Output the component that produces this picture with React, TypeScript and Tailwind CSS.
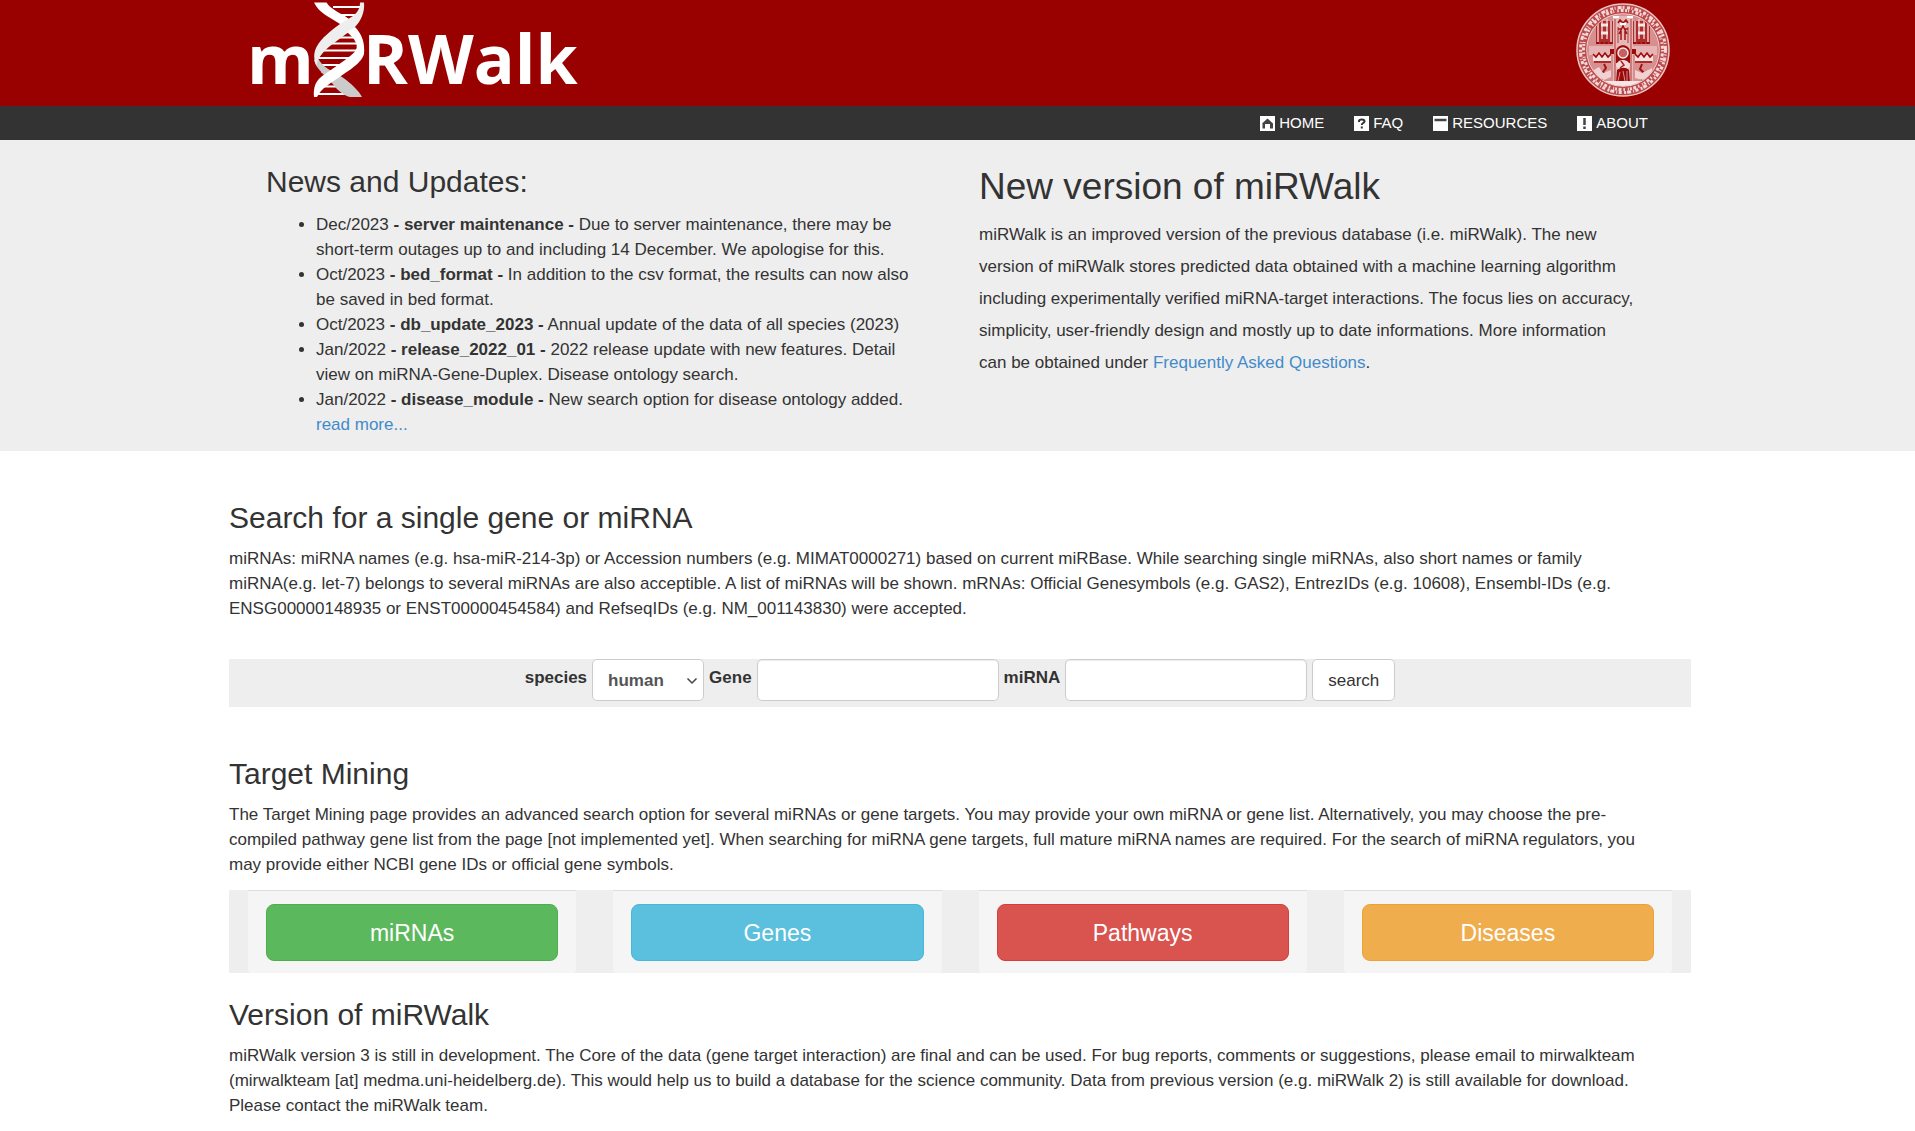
import type { ReactNode } from "react";

function Logo() {
  return (
    <svg className="block h-[106px] w-[340px]" viewBox="0 0 340 106" role="img" aria-label="miRWalk">
      <g fill="#fff" fontFamily="'Open Sans', 'Noto Sans', sans-serif" fontWeight="700" fontSize="68">
        <text x="1" y="84">m</text>
        <text x="117" y="84">RWalk</text>
      </g>
      {/* rungs */}
      <path
        d="M87 7H116M93 15H112M98 32H106M92 37.500H111M85 43.500H113M78 50.500H111M73 58H103M71 65H93M75 71.500H88M76 86.500H98M71 94H110"
        stroke="#fff"
        strokeWidth="2"
      />
      {/* strands */}
      <path d="M68 60C70 70 82 77 90 88C94 92 99 96 104 97H116C113 91 106 84 96 77C86 71 76 67 72 58Z" fill="#cbcbcb" />
      <path d="M68 2.500H80.500C86 11 96 13 103 19L109 27L101 32L94 24C82 16 73 13 68 2.500Z" fill="#fff" />
      <path d="M118 2.500H114C114 8 112 12 107 16L94 24C86 30 75 38 70.500 47C67 54 68 60 70.500 66C71 58 78 51 84 46L96 37C101 33 106 30 109 27C115 21 119 12 118 2.500Z" fill="#eee" />
      <path d="M109 27C116 34 119 43 118 54C115 65 98 73 82 85C76 89 73 93 71 97H68C67 82 73 78 82 72L99 60C107 54 113 50 110 43C108 38 104 35 101 32Z" fill="#fff" />
    </svg>
  );
}

function Seal() {
  return (
    <svg className="mt-px block h-[98px] w-[96px]" viewBox="0 0 96 98" role="img" aria-label="University seal">
      <defs>
        <clipPath id="seal-inner">
          <circle cx="48" cy="49" r="36" />
        </clipPath>
      </defs>
      <g fill="none">
        <circle cx="48" cy="49" r="41" stroke="#bd4a4a" strokeWidth="10" />
        <circle cx="48" cy="49" r="46" stroke="#ecc4c4" strokeWidth="1.500" />
        <circle cx="48" cy="49" r="42.500" stroke="#f3dada" strokeWidth="3" strokeDasharray="3 1.500 1 2 4 1 2 2.500" />
        <circle cx="48" cy="49" r="39.500" stroke="#f3dada" strokeWidth="3" strokeDasharray="1.500 2 3 1.500 2 1 1 3" />
        <circle cx="48" cy="49" r="36" stroke="#f3dada" strokeWidth="1.500" />
      </g>
      <g clipPath="url(#seal-inner)">
        <rect x="12" y="13" width="72" height="72" fill="#d88f8f" />
        {/* windows */}
        <path d="M21 20H38V43H21ZM58 20H75V43H58Z" fill="#ad2c2c" />
        <path d="M23 22V41M27 18V38M32 18V38M36 20V41M60 20V41M64 18V38M69 18V38M73 20V41" stroke="#edc9c9" strokeWidth="1.500" />
        <path d="M26 24H33M26 32H33M63 24H70M63 32H70" stroke="#f8e8e8" strokeWidth="3" />
        <path d="M21 42H38M58 42H75" stroke="#9d0b0b" strokeWidth="2" strokeDasharray="3 1.500" />
        <path d="M14 45H38V54H14ZM58 45H82V54H58Z" fill="#e6b4b4" />
        {/* canopies */}
        <path d="M18 60V54L21 57L24 53L27 57L30 53L33 57L36 54V60ZM60 60V54L63 57L66 53L69 57L72 53L75 57L78 54V60Z" fill="#f6e0e0" />
        <path d="M18 53L21 56L24 52L27 56L30 52L33 56L36 53M60 53L63 56L66 52L69 56L72 52L75 56L78 53M19 61H36M60 61H77" fill="none" stroke="#9d0b0b" strokeWidth="1.500" />
        {/* central tower */}
        <path d="M38 15H58V84H38Z" fill="#e6b8b8" />
        <path d="M40 18V82M56 18V82M43 42V26M53 42V26" stroke="#b03a3a" strokeWidth="1" />
        <path d="M43 22L45 19L48 22L51 19L53 22M44 33L48 25L52 33M46 39V30M50 39V30M43 28H46M50 28H53" fill="none" stroke="#a01414" strokeWidth="1.500" />
        <path d="M38 16H44M52 16H58M45 23H51" stroke="#fff" strokeWidth="2" />
        <path d="M35 48H39V53H35ZM57 48H61V53H57Z" fill="#9d0b0b" />
        {/* enthroned figure */}
        <path d="M41 62V51C41 42 55 42 55 51V62Z" fill="#9a0a0a" />
        <circle cx="48" cy="52" r="5" fill="#c76060" stroke="#f8e8e8" strokeWidth="1.500" />
        <path d="M41 65C42 57 54 57 55 65L52 69H44Z" fill="#f3dada" />
        <path d="M46 60L49 64L45 67" fill="none" stroke="#a82020" strokeWidth="1.500" />
        <path d="M42 69C46 66 51 66 54 69L55 82H41Z" fill="#9a0a0a" />
        <path d="M45 71L43 80M48 70L50 80M52 70V80" stroke="#d79090" strokeWidth="1" />
        {/* kneeling figures */}
        <path d="M29 63L31 67L28 71L32 74L25 80L22 82M67 63L65 68L69 72L66 77L70 82" fill="none" stroke="#a01414" strokeWidth="2" />
        <path d="M17 70L24 66L28 72L36 69V76L29 79L21 77M60 69L67 72L77 67V75L68 79L60 77" fill="#f0d2d2" />
        <path d="M22 80H74C66 87 32 87 22 80Z" fill="#f6e5e5" />
      </g>
    </svg>
  );
}

const navItems: { label: string; icon: ReactNode }[] = [
  { label: "HOME", icon: <path d="M2 7.500L7.500 2.500L13 7.500V12.500H10V8H5V12.500H2.500V7.500Z" fill="#444" /> },
  {
    label: "FAQ",
    icon: <path d="M5 6V5C5 3 10.500 3 10.500 5.200C10.500 7.200 7.800 6.800 7.800 9M7.800 10.500V12.500" fill="none" stroke="#333" strokeWidth="2" />,
  },
  { label: "RESOURCES", icon: <path d="M1.500 4H13.500" stroke="#444" strokeWidth="2.500" /> },
  { label: "ABOUT", icon: <path d="M7.500 2V9M7.500 10.500V13" stroke="#444" strokeWidth="2.500" /> },
];

const news: { date: string; name: string; text: ReactNode }[] = [
  {
    date: "Dec/2023",
    name: "server maintenance",
    text: <>Due to server maintenance, there may be<br />short-term outages up to and including 14 December. We apologise for this.</>,
  },
  {
    date: "Oct/2023",
    name: "bed_format",
    text: <>In addition to the csv format, the results can now also<br />be saved in bed format.</>,
  },
  { date: "Oct/2023", name: "db_update_2023", text: "Annual update of the data of all species (2023)" },
  {
    date: "Jan/2022",
    name: "release_2022_01",
    text: <>2022 release update with new features. Detail<br />view on miRNA-Gene-Duplex. Disease ontology search.</>,
  },
  { date: "Jan/2022", name: "disease_module", text: "New search option for disease ontology added." },
];

const targets = [
  { label: "miRNAs", color: "border-[#4cae4c] bg-[#5cb85c]" },
  { label: "Genes", color: "border-[#46b8da] bg-[#5bc0de]" },
  { label: "Pathways", color: "border-[#d43f3a] bg-[#d9534f]" },
  { label: "Diseases", color: "border-[#eea236] bg-[#f0ad4e]" },
];

const field = "h-[42px] rounded-[5px] border border-[#ccc] bg-white";

export default function App() {
  return (
    <div className="min-h-screen bg-white font-['Liberation_Sans',Arial,sans-serif] text-[17px] leading-[25px] text-[#333]">
      <header>
        <div className="bg-[#990000] pl-[5px]">
          <div className="mx-auto flex max-w-[1462px] items-start justify-between pr-[20px] pl-[17px]">
            <Logo />
            <Seal />
          </div>
        </div>
        <nav className="bg-[#333] pl-[5px]">
          <ul className="mx-auto flex h-[34px] max-w-[1462px] items-center justify-end gap-[30px] pr-[43px] text-[15px] leading-[20px] text-white">
            {navItems.map((item) => (
              <li key={item.label}>
                <a href="#" className="flex items-center gap-1">
                  <svg className="size-[15px]" viewBox="0 0 15 15" aria-hidden="true">
                    <rect width="15" height="15" fill="#fff" />
                    {item.icon}
                  </svg>
                  {item.label}
                </a>
              </li>
            ))}
          </ul>
        </nav>
      </header>

      <section className="bg-[#eee] pl-[5px]">
        <div className="mx-auto grid max-w-[1462px] grid-cols-2 pr-[19px] pl-[37px]">
          <div className="pt-[25px] pb-[14px]">
            <h2 className="text-[30px] leading-[33px]">News and Updates:</h2>
            <ul className="mt-[14px] list-disc pl-[50px] whitespace-nowrap">
              {news.map((item) => (
                <li key={item.name}>
                  {item.date} <b>- {item.name} -</b> {item.text}
                </li>
              ))}
              <li className="list-none">
                <a href="#" className="text-[#428bca]">read more...</a>
              </li>
            </ul>
          </div>
          <div className="pt-[26px] pl-[10px]">
            <h1 className="text-[37px] leading-[41px]">New version of miRWalk</h1>
            <p className="mt-[12px] leading-[32px] whitespace-nowrap">
              miRWalk is an improved version of the previous database (i.e. miRWalk). The new
              <br />
              version of miRWalk stores predicted data obtained with a machine learning algorithm
              <br />
              including experimentally verified miRNA-target interactions. The focus lies on accuracy,
              <br />
              simplicity, user-friendly design and mostly up to date informations. More information
              <br />
              can be obtained under <a href="#" className="text-[#428bca]">Frequently Asked Questions</a>.
            </p>
          </div>
        </div>
      </section>

      <div className="pl-[5px]">
        <main className="mx-auto max-w-[1462px]">
          <section className="pt-[50px]">
            <h2 className="text-[30px] leading-[33px]">Search for a single gene or miRNA</h2>
            <p className="mt-[12px]">
              miRNAs: miRNA names (e.g. hsa-miR-214-3p) or Accession numbers (e.g. MIMAT0000271) based on current miRBase. While searching single miRNAs, also short names or family
              <br />
              miRNA(e.g. let-7) belongs to several miRNAs are also acceptible. A list of miRNAs will be shown. mRNAs: Official Genesymbols (e.g. GAS2), EntrezIDs (e.g. 10608), Ensembl-IDs (e.g.
              <br />
              ENSG00000148935 or ENST00000454584) and RefseqIDs (e.g. NM_001143830) were accepted.
            </p>
            <form className="mt-[38px] flex items-start justify-center gap-[5px] bg-[#eee] pb-[6px]" onSubmit={(e) => e.preventDefault()}>
              <label htmlFor="species" className="pt-[6px] font-bold">species</label>
              <div className="relative">
                <select id="species" className={`${field} w-[112px] appearance-none pl-[15px] font-bold text-[#555]`}>
                  <option>human</option>
                </select>
                <svg className="pointer-events-none absolute top-[18px] right-[6px] h-[8px] w-[12px]" viewBox="0 0 12 8" aria-hidden="true">
                  <path d="M1.500 1.500L6 6L10.500 1.500" fill="none" stroke="#444" strokeWidth="1.500" />
                </svg>
              </div>
              <label htmlFor="gene" className="pt-[6px] font-bold">Gene</label>
              <input id="gene" type="text" className={`${field} w-[242px] px-[15px] shadow-[inset_0_1px_1px_rgba(0,0,0,0.075)]`} />
              <label htmlFor="mirna" className="pt-[6px] font-bold">miRNA</label>
              <input id="mirna" type="text" className={`${field} w-[242px] px-[15px] shadow-[inset_0_1px_1px_rgba(0,0,0,0.075)]`} />
              <button type="submit" className={`${field} px-[15px]`}>search</button>
            </form>
          </section>

          <section className="pt-[50px]">
            <h2 className="text-[30px] leading-[33px]">Target Mining</h2>
            <p className="mt-[12px]">
              The Target Mining page provides an advanced search option for several miRNAs or gene targets. You may provide your own miRNA or gene list. Alternatively, you may choose the pre-
              <br />
              compiled pathway gene list from the page [not implemented yet]. When searching for miRNA gene targets, full mature miRNA names are required. For the search of miRNA regulators, you
              <br />
              may provide either NCBI gene IDs or official gene symbols.
            </p>
            <div className="mt-[13px] grid grid-cols-4 gap-[37px] bg-[#eee] px-[19px]">
              {targets.map((t) => (
                <div key={t.label} className="rounded-b-[4px] border-t border-[#ddd] bg-[#f5f5f5] px-[18px] pt-[13px] pb-[12px]">
                  <button type="button" className={`h-[57px] w-full rounded-[8px] border text-[23px] leading-[30px] text-white ${t.color}`}>
                    {t.label}
                  </button>
                </div>
              ))}
            </div>
          </section>

          <section className="pt-[25px]">
            <h2 className="text-[30px] leading-[33px]">Version of miRWalk</h2>
            <p className="mt-[12px]">
              miRWalk version 3 is still in development. The Core of the data (gene target interaction) are final and can be used. For bug reports, comments or suggestions, please email to mirwalkteam
              <br />
              (mirwalkteam [at] medma.uni-heidelberg.de). This would help us to build a database for the science community. Data from previous version (e.g. miRWalk 2) is still available for download.
              <br />
              Please contact the miRWalk team.
            </p>
          </section>
        </main>
      </div>
    </div>
  );
}
